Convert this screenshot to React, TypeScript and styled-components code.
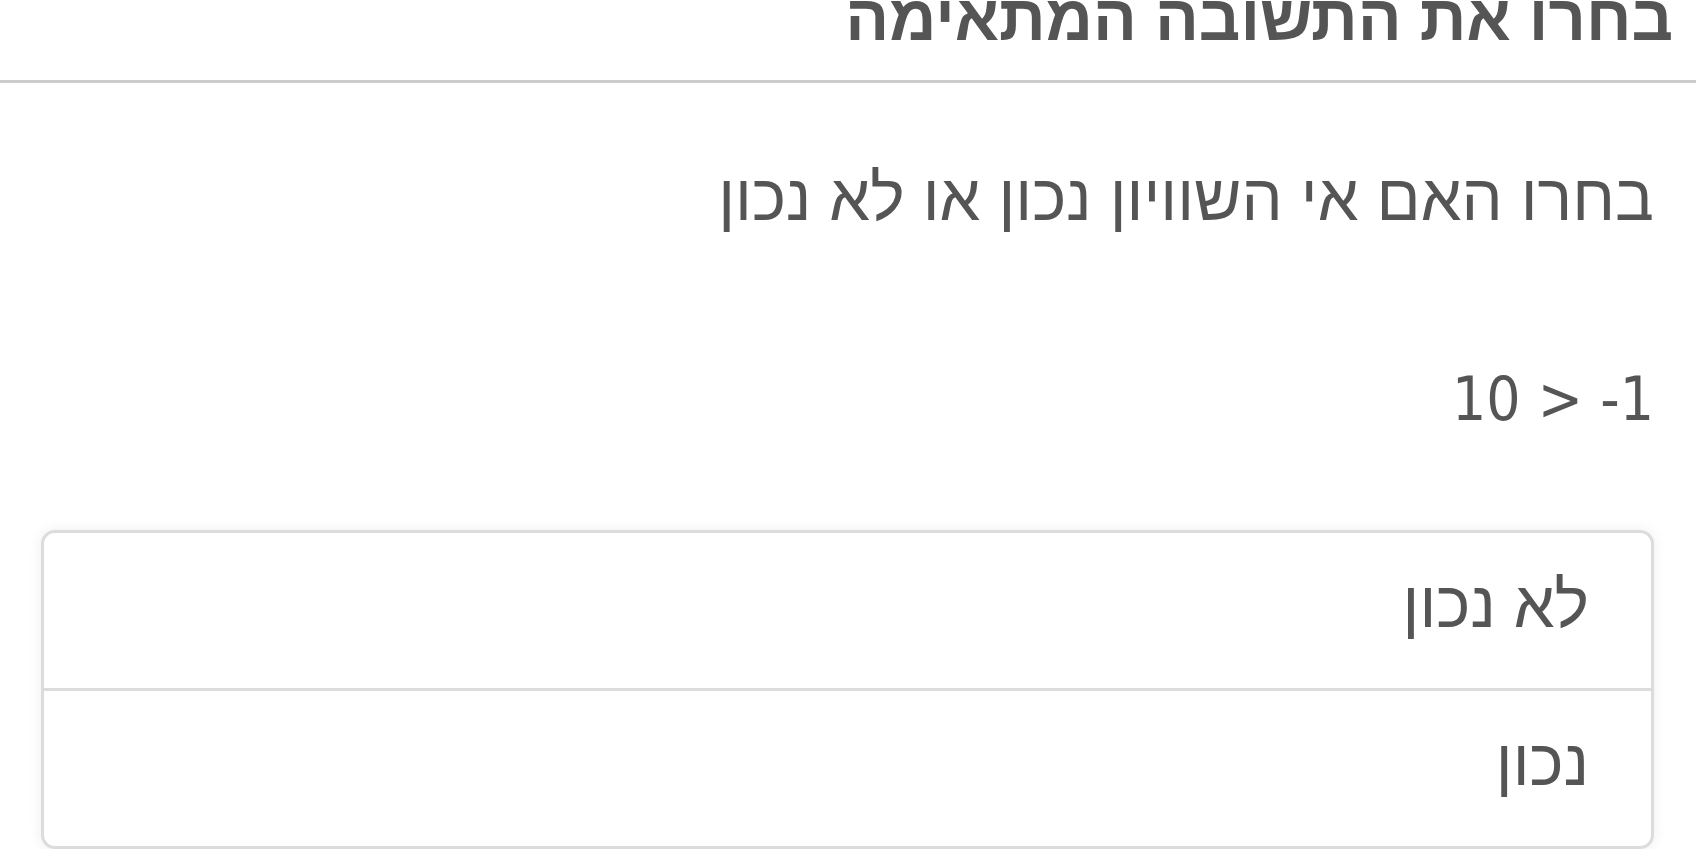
import styled, { createGlobalStyle } from "styled-components";

const GlobalStyle = createGlobalStyle`
    html, body {
        margin: 0;
        padding: 0;
        background: #ffffff;
    }
    body {
        direction: rtl;
        font-family: "Liberation Sans", Arial, sans-serif;
        color: #555555;
    }
`;

const Page = styled.div`
    display: flex;
    flex-direction: column;
`;

const Header = styled.header`
    margin-top: -15px;
    padding: 0 23px 30px 41px;
    border-bottom: 3px solid #cccccc;
`;

const Title = styled.h1`
    margin: 0;
    font-size: 65px;
    line-height: 1;
    font-weight: bold;
    color: #555555;
`;

const Body = styled.main`
    display: flex;
    flex-direction: column;
    padding: 0 42px 0 41px;
`;

const Question = styled.p`
    margin: 76px 0 0;
    font-size: 65px;
    line-height: 78px;
`;

const Expression = styled.p`
    margin: 126px 0 0;
    font-family: "DejaVu Sans Condensed", "DejaVu Sans", sans-serif;
    font-size: 60px;
    line-height: 72px;
    direction: ltr;
    text-align: right;
`;

const Choices = styled.ul`
    list-style: none;
    margin: 95px 0 0;
    padding: 0;
    border: 3px solid #dcdcdc;
    border-radius: 14px;
    background: #ffffff;
    box-shadow: 0 0 14px rgba(0, 0, 0, 0.07);
    overflow: hidden;
`;

const Choice = styled.li`
    padding: 33px 62px 44px 20px;
    font-size: 65px;
    line-height: 78px;
    cursor: pointer;
    & + & {
        border-top: 3px solid #dcdcdc;
    }
`;

const answers = ["לא נכון", "נכון"];

function App() {
    return (
        <Page>
            <GlobalStyle />
            <Header>
                <Title>בחרו את התשובה המתאימה</Title>
            </Header>
            <Body>
                <Question>בחרו האם אי השוויון נכון או לא נכון</Question>
                <Expression>10 &gt; -1</Expression>
                <Choices>
                    {answers.map((answer) => (
                        <Choice key={answer}>{answer}</Choice>
                    ))}
                </Choices>
            </Body>
        </Page>
    );
}

export default App;
